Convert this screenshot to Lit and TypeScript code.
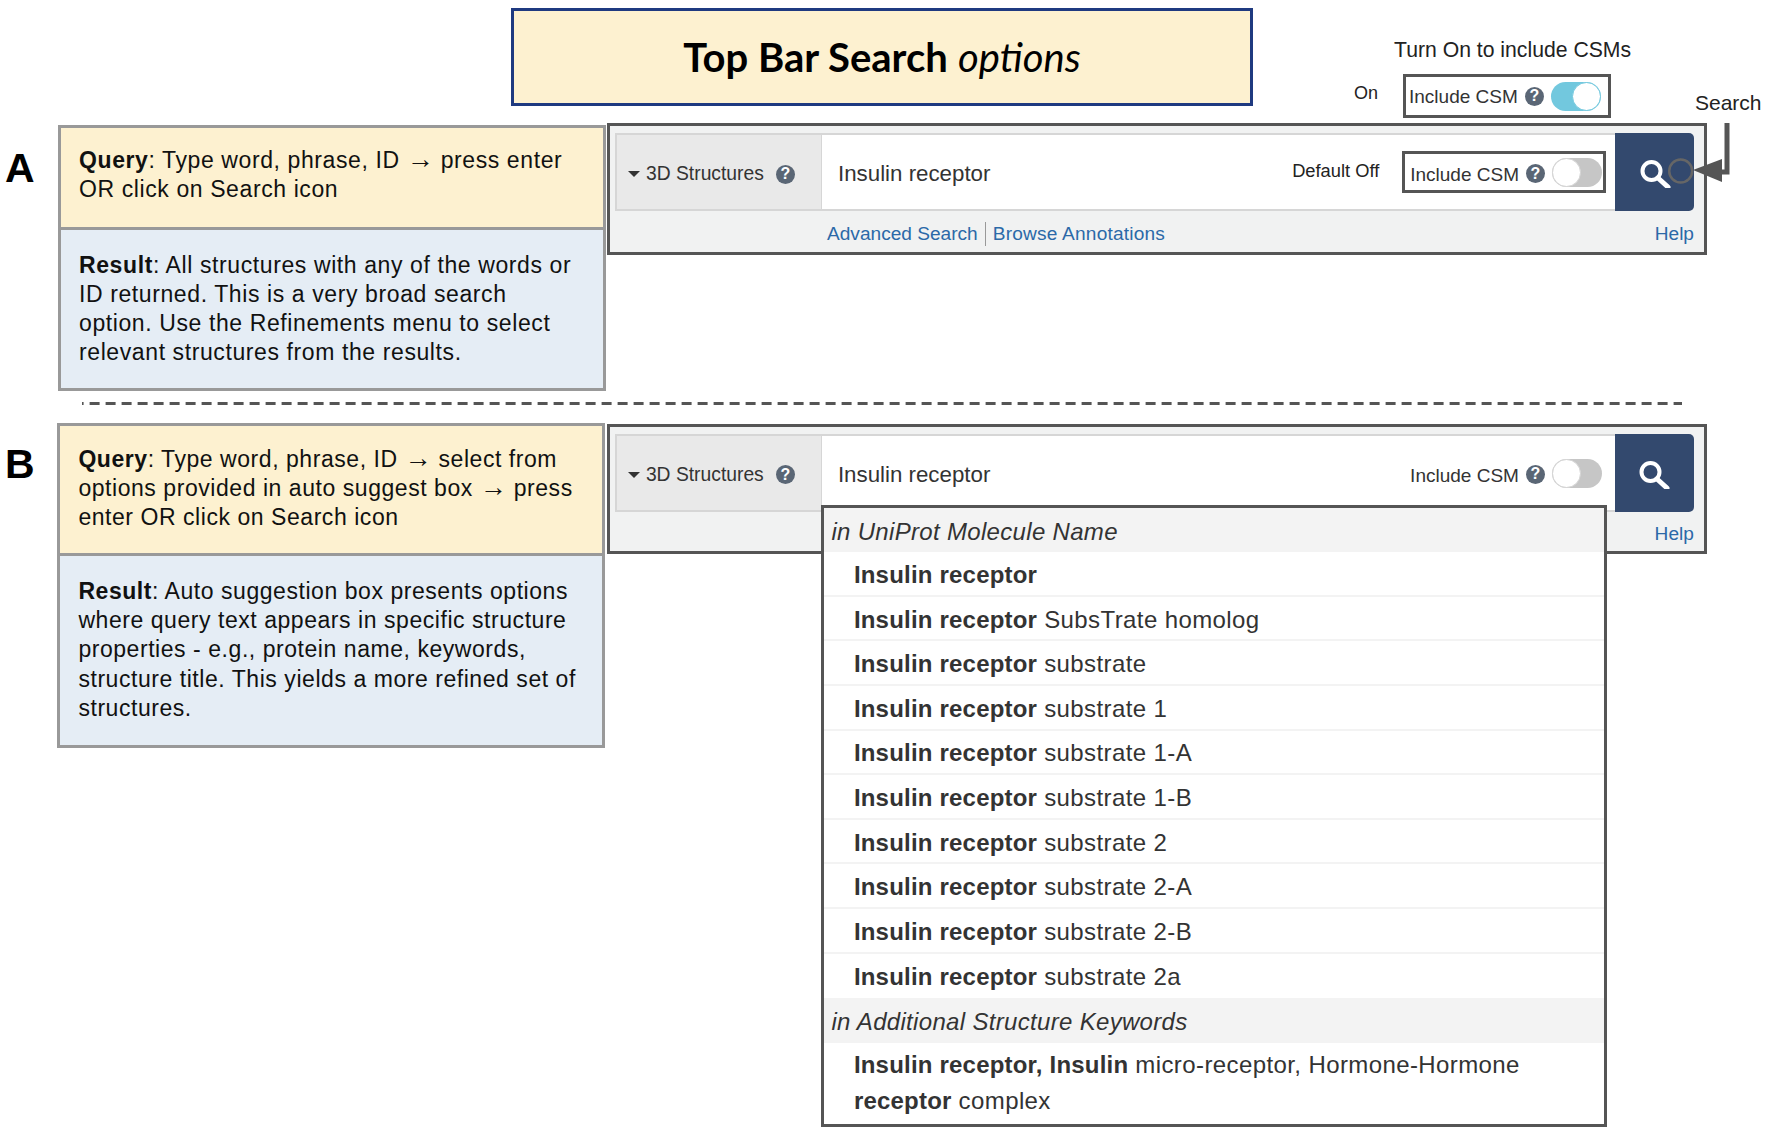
import { LitElement, html, css } from "lit";
import { customElement } from "lit/decorators.js";

type Suggestion = { bold: string; rest: string };

const SUGGESTIONS: Suggestion[] = [
  { bold: "Insulin receptor", rest: "" },
  { bold: "Insulin receptor", rest: " SubsTrate homolog" },
  { bold: "Insulin receptor", rest: " substrate" },
  { bold: "Insulin receptor", rest: " substrate 1" },
  { bold: "Insulin receptor", rest: " substrate 1-A" },
  { bold: "Insulin receptor", rest: " substrate 1-B" },
  { bold: "Insulin receptor", rest: " substrate 2" },
  { bold: "Insulin receptor", rest: " substrate 2-A" },
  { bold: "Insulin receptor", rest: " substrate 2-B" },
  { bold: "Insulin receptor", rest: " substrate 2a" },
];

@customElement("app-root")
export class AppRoot extends LitElement {
  static styles = css`
    :host {
      display: block;
      font-family: "Liberation Sans", Arial, sans-serif;
      color: #222;
    }

    .page {
      width: 1780px;
      height: 1134px;
      background: #fff;
      overflow: hidden;
      box-sizing: border-box;
    }

    /* top row */
    .top {
      display: flex;
      height: 123px;
      box-sizing: border-box;
      padding: 8px 0 0 511px;
    }

    .title {
      width: 742px;
      height: 98px;
      box-sizing: border-box;
      border: 3px solid #1f3a80;
      background: #fdf1d0;
      display: flex;
      align-items: center;
      justify-content: center;
      font-family: Lato, sans-serif;
      font-size: 40px;
      color: #000;
      white-space: pre;
    }

    .title b {
      font-weight: 700;
    }

    .title i {
      font-weight: 400;
    }

    .callout {
      margin-left: 102px;
      display: flex;
      flex-direction: column;
    }

    .callout-title {
      font-size: 21.2px;
      line-height: 26px;
      margin: 29px 0 0 39px;
      white-space: nowrap;
    }

    .callout-row {
      display: flex;
      align-items: center;
      margin: 11px 0 0 -1px;
    }

    .on {
      font-size: 18px;
      width: 49px;
      position: relative;
      top: -3px;
    }

    /* sections */
    .section {
      display: flex;
      align-items: flex-start;
    }

    .letter {
      width: 53px;
      padding-left: 5px;
      flex-shrink: 0;
      font-size: 41px;
      font-weight: 700;
      line-height: 46px;
      color: #000;
    }

    .section-a .letter {
      margin-top: 22px;
    }

    .section-b .letter {
      margin-top: 18px;
      width: 52.4px;
    }

    .stack {
      flex-shrink: 0;
      width: 547.5px;
      font-size: 23px;
      line-height: 29.3px;
      letter-spacing: 0.6px;
      color: #111;
      white-space: nowrap;
    }

    .section-a .stack {
      margin-top: 2px;
    }

    .section-b .stack {
      letter-spacing: 0.55px;
    }

    .note {
      box-sizing: border-box;
      border: 3px solid #999;
      padding-left: 18px;
    }

    .note b {
      font-weight: 700;
    }

    .arr {
      font-size: 27px;
      line-height: 0;
      letter-spacing: 0;
    }

    .query {
      background: #fdf1d0;
    }

    .result {
      background: #e5edf5;
      margin-top: -3px;
    }

    .section-a .query {
      padding-top: 18px;
      padding-bottom: 22px;
    }

    .section-a .result {
      padding-top: 21px;
      padding-bottom: 20px;
    }

    .section-b .query {
      padding-top: 19px;
      padding-bottom: 20px;
    }

    .section-b .result {
      padding-top: 21px;
      padding-bottom: 22px;
    }

    .divider {
      width: 1600px;
      margin: 11.5px 0 17.5px 81.7px;
      height: 3px;
      background: linear-gradient(to right, #555 10.5px, transparent 10.5px) 7.6px 0 / 16px 100%
        repeat-x;
    }

    /* search panel */
    .panel {
      position: relative;
      flex-shrink: 0;
      width: 1100px;
      box-sizing: border-box;
      border: 3px solid #555;
      background: #f1f2f2;
      padding: 7px 10px 0 5px;
      margin-left: 1.5px;
    }

    .section-a .panel {
      height: 132px;
    }

    .section-b .panel {
      height: 130px;
      margin-top: 1px;
      margin-left: 2px;
    }

    .bar {
      display: flex;
      height: 78px;
    }

    .select {
      width: 207px;
      box-sizing: border-box;
      display: flex;
      align-items: center;
      padding: 4px 0 0 11px;
      background: #e9e9e9;
      border: 2px solid #d6d6d6;
      border-right-width: 1px;
      font-size: 19.3px;
      color: #333;
      white-space: nowrap;
    }

    .caret {
      width: 0;
      height: 0;
      border-left: 6px solid transparent;
      border-right: 6px solid transparent;
      border-top: 6px solid #333;
      margin-right: 6px;
    }

    .select .help {
      margin-left: 12px;
    }

    .input {
      flex: 1;
      display: flex;
      align-items: center;
      background: #fff;
      border-top: 2px solid #d6d6d6;
      border-bottom: 2px solid #d6d6d6;
      padding: 0 9px 0 16px;
      font-size: 22.3px;
      color: #333;
      white-space: nowrap;
    }

    .query-text {
      padding-top: 4px;
    }

    .default {
      margin: 0 23px 2px auto;
      font-size: 18.3px;
      color: #222;
    }

    .section-b .input {
      padding-right: 13px;
    }

    .section-b .csm {
      margin-left: auto;
    }

    .button {
      width: 79px;
      display: flex;
      align-items: center;
      justify-content: center;
      background: #33496e;
      border-radius: 0 5px 5px 0;
    }

    .links {
      display: flex;
      align-items: center;
      height: 45px;
      padding-left: 212px;
      font-size: 19.1px;
      color: #2b69a8;
      white-space: nowrap;
    }

    .links .sep {
      width: 1px;
      height: 24px;
      background: #999;
      margin: 0 7px;
    }

    .links .browse {
      letter-spacing: 0.2px;
    }

    .links .help-link {
      margin-left: auto;
    }

    /* include CSM control */
    .csm {
      display: flex;
      align-items: center;
      gap: 7px;
      font-size: 19px;
      color: #333;
      white-space: nowrap;
    }

    .csm-label {
      padding-top: 2px;
    }

    .panel .csm-label {
      padding-top: 6px;
    }

    .panel .csm .help {
      margin-top: 3px;
    }

    .panel .csm .toggle {
      margin-top: 1px;
    }

    .boxed {
      box-sizing: border-box;
      background: #fff;
      border: 3px solid #555;
      height: 42px;
      padding: 0 1px 0 5px;
    }

    .callout .boxed {
      height: 44px;
      width: 208px;
      padding-left: 3px;
    }

    .help {
      display: inline-flex;
      align-items: center;
      justify-content: center;
      width: 19px;
      height: 19px;
      border-radius: 50%;
      background: #5a6675;
      color: #fff;
      font-size: 16px;
      font-weight: 700;
      flex-shrink: 0;
    }

    .toggle {
      width: 50px;
      height: 29px;
      box-sizing: border-box;
      border-radius: 15px;
      background: #c6c6c6;
      display: flex;
      justify-content: flex-start;
      flex-shrink: 0;
    }

    .toggle::after {
      content: "";
      width: 29px;
      height: 29px;
      box-sizing: border-box;
      border-radius: 50%;
      background: #fff;
      border: 1.5px solid #d4d4d4;
    }

    .toggle.on-state {
      background: #72c8de;
      justify-content: flex-end;
    }

    .toggle.on-state::after {
      border-color: #72c8de;
    }

    /* annotation over the search button */
    .search-label {
      position: absolute;
      left: 1085px;
      top: -36px;
      font-size: 21px;
      line-height: 26px;
      color: #222;
    }

    .arrow {
      position: absolute;
      left: 1055px;
      top: -6px;
    }

    /* auto suggest menu */
    .menu {
      position: absolute;
      left: 211px;
      top: 78px;
      width: 786.5px;
      height: 622px;
      box-sizing: border-box;
      border: 3px solid #555;
      background: #fff;
      font-size: 24px;
      letter-spacing: 0.4px;
      color: #333;
    }

    .menu b {
      letter-spacing: 0.2px;
    }

    .group {
      display: flex;
      align-items: center;
      height: 44.5px;
      box-sizing: border-box;
      padding: 3px 0 0 7.5px;
      background: #f3f3f3;
      font-style: italic;
      letter-spacing: 0.32px;
      white-space: nowrap;
    }

    .item {
      display: flex;
      align-items: center;
      height: 44.6px;
      box-sizing: border-box;
      padding: 3px 0 0 30px;
      border-bottom: 2px solid #f3f3f3;
      white-space: pre;
    }

    .item.last {
      border-bottom: none;
    }

    .item-wrap {
      padding: 4px 0 0 30px;
      line-height: 36.5px;
      white-space: pre;
    }
  `;

  private help() {
    return html`<span class="help">?</span>`;
  }

  private csm(on: boolean, boxed: boolean) {
    return html`<div class="csm ${boxed ? "boxed" : ""}">
      <span class="csm-label">Include CSM</span>
      ${this.help()}
      <span class="toggle ${on ? "on-state" : ""}"></span>
    </div>`;
  }

  private searchIcon() {
    return html`<svg width="32" height="32" viewBox="0 0 32 32" fill="none" stroke="#fff">
      <circle cx="12.5" cy="15" r="9" stroke-width="4"></circle>
      <path d="M19 22 L29 31" stroke-width="5" stroke-linecap="round"></path>
    </svg>`;
  }

  private selector() {
    return html`<div class="select">
      <span class="caret"></span>3D Structures ${this.help()}
    </div>`;
  }

  private arrowGlyph() {
    return html`<span class="arr">→</span>`;
  }

  render() {
    return html`<div class="page">
      <div class="top">
        <div class="title"><span><b>Top Bar Search</b> <i>options</i></span></div>
        <div class="callout">
          <div class="callout-title">Turn On to include CSMs</div>
          <div class="callout-row">
            <span class="on">On</span>
            ${this.csm(true, true)}
          </div>
        </div>
      </div>

      <div class="section section-a">
        <div class="letter">A</div>
        <div class="stack">
          <div class="note query">
            <b>Query</b>: Type word, phrase, ID ${this.arrowGlyph()} press enter<br />OR click on
            Search icon
          </div>
          <div class="note result">
            <b>Result</b>: All structures with any of the words or<br />ID returned. This is a very
            broad search<br />option. Use the Refinements menu to select<br />relevant structures
            from the results.
          </div>
        </div>
        <div class="panel">
          <div class="bar">
            ${this.selector()}
            <div class="input">
              <span class="query-text">Insulin receptor</span>
              <span class="default">Default Off</span>
              ${this.csm(false, true)}
            </div>
            <div class="button">${this.searchIcon()}</div>
          </div>
          <div class="links">
            <span>Advanced Search</span><span class="sep"></span><span class="browse"
              >Browse Annotations</span
            >
            <span class="help-link">Help</span>
          </div>
          <div class="search-label">Search</div>
          <svg class="arrow" width="70" height="70" viewBox="0 0 70 70" fill="none">
            <circle cx="15.7" cy="51" r="11.5" stroke="#666" stroke-width="2.5"></circle>
            <path d="M62 3 V52 H50" stroke="#555" stroke-width="5"></path>
            <path d="M28 50 L57 39 V62 Z" fill="#555"></path>
          </svg>
        </div>
      </div>

      <div class="divider"></div>

      <div class="section section-b">
        <div class="letter">B</div>
        <div class="stack">
          <div class="note query">
            <b>Query</b>: Type word, phrase, ID ${this.arrowGlyph()} select from<br />options
            provided in auto suggest box ${this.arrowGlyph()} press<br />enter OR click on Search
            icon
          </div>
          <div class="note result">
            <b>Result</b>: Auto suggestion box presents options<br />where query text appears in
            specific structure<br />properties - e.g., protein name, keywords,<br />structure title.
            This yields a more refined set of<br />structures.
          </div>
        </div>
        <div class="panel">
          <div class="bar">
            ${this.selector()}
            <div class="input">
              <span class="query-text">Insulin receptor</span>
              ${this.csm(false, false)}
            </div>
            <div class="button">${this.searchIcon()}</div>
          </div>
          <div class="links"><span class="help-link">Help</span></div>
          <div class="menu">
            <div class="group">in UniProt Molecule Name</div>
            ${SUGGESTIONS.map(
              (item, i) => html`<div class="item ${i === SUGGESTIONS.length - 1 ? "last" : ""}"><b>${item.bold}</b>${item.rest}</div>`,
            )}
            <div class="group">in Additional Structure Keywords</div>
            <div class="item-wrap"><b>Insulin receptor, Insulin</b> micro-receptor, Hormone-Hormone<br /><b>receptor</b> complex</div>
          </div>
        </div>
      </div>
    </div>`;
  }
}
